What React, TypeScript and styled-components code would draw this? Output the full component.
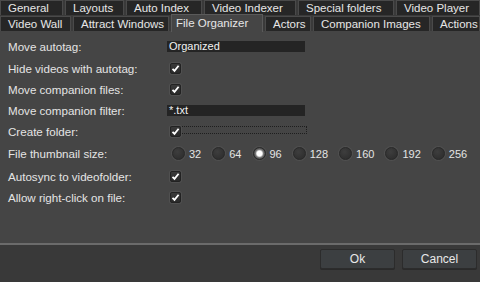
import React from 'react';
import styled, { createGlobalStyle } from 'styled-components';

const GlobalStyle = createGlobalStyle`
  html, body {
    margin: 0;
    padding: 0;
    background: #393939;
  }
  body {
    font-family: "Liberation Sans", Arial, sans-serif;
  }
`;

const Dialog = styled.div`
  width: 480px;
  height: 282px;
  display: flex;
  flex-direction: column;
  background: #393939;
  overflow: hidden;
`;

// Tabs
const TabBar = styled.div`
  display: flex;
  flex-direction: column;
  gap: 1px;
  background: #3a3a3a;
`;

const TabRow = styled.div`
  display: flex;
  gap: 2px;
  height: 15px;
`;

const Tab = styled.div<{ $w: number; $active?: boolean }>`
  width: ${(p) => p.$w}px;
  flex: ${(p) => (p.$w ? 'none' : '1')};
  box-sizing: border-box;
  padding-left: 7px;
  font-size: 11.5px;
  line-height: 14px;
  color: #e6e6e6;
  white-space: nowrap;
  background: ${(p) => (p.$active ? '#454545' : '#262626')};
  border: 1px solid ${(p) => (p.$active ? '#5a5a5a' : '#4a4a4a')};
  border-bottom: none;
  ${(p) =>
    p.$active &&
    `
    margin-top: -2px;
    height: 18px;
    line-height: 16px;
    padding-left: 4px;
    position: relative;
    z-index: 1;
  `}
`;

const Content = styled.div`
  height: 214px;
  background: #454545;
  padding: 5px 0 0 8px;
  box-sizing: border-box;
  border-bottom: 2px solid #6b6b6b;
`;

const Row = styled.div<{ $h?: number }>`
  display: grid;
  grid-template-columns: 159px 1fr;
  align-items: center;
  height: ${(p) => p.$h ?? 21}px;
`;

const Label = styled.span`
  font-size: 11.6px;
  color: #e4e4e4;
`;

const TextBox = styled.div`
  width: 138px;
  height: 11px;
  background: #242424;
  color: #f2f2f2;
  font-size: 11px;
  line-height: 11px;
  padding-left: 2px;
  box-sizing: border-box;
`;

const Box = styled.span`
  display: inline-flex;
  align-items: center;
  justify-content: center;
  width: 11px;
  height: 11px;
  margin-left: 3px;
  box-sizing: border-box;
  border: 1px solid #222;
  border-radius: 2px;
  background: linear-gradient(#3a3a3a, #2a2a2a);
  box-shadow: 0 0 0 1px #505050;
`;

const FocusFrame = styled.div`
  width: 137px;
  height: 8px;
  margin-left: 3px;
  box-sizing: border-box;
  border: 1px dotted #1e1e1e;
  display: flex;
  align-items: flex-start;
  margin-top: -3px;
  & > ${Box} {
    margin: -1px 0 0 -1px;
  }
`;

const RadioGroup = styled.div`
  display: flex;
  align-items: center;
  margin-left: 5px;
`;

const RadioItem = styled.label`
  display: flex;
  align-items: center;
  gap: 4px;
  margin-right: 11px;
  font-size: 11px;
  color: #e4e4e4;
`;

const Dot = styled.span<{ $on?: boolean }>`
  width: 13px;
  height: 13px;
  border-radius: 50%;
  box-sizing: border-box;
  border: 1px solid #2a2a2a;
  background: ${(p) =>
    p.$on
      ? 'radial-gradient(circle, #fff 0 2.5px, #d8d8d8 3px, #7a7a7a 4px, #3a3a3a 6px)'
      : 'radial-gradient(circle at 40% 35%, #3e3e3e, #2a2a2a)'};
  box-shadow: 0 0 0 1px #505050;
`;

const Footer = styled.div`
  flex: 1;
  display: flex;
  justify-content: flex-end;
  gap: 7px;
  padding: 4px 3px 0 0;
`;

const Button = styled.button`
  width: 75px;
  height: 20px;
  background: #3c3f41;
  border: 1px solid #2c2c2c;
  border-radius: 2px;
  color: #e8e8e8;
  font-family: "Liberation Sans", Arial, sans-serif;
  font-size: 12px;
  padding: 0;
  box-shadow: 0 1px 0 #2a2a2a;
`;

const Check = () => (
  <svg width="9" height="9" viewBox="0 0 9 9">
    <path d="M1.5 4.8 L3.5 6.8 L7.6 1.8" fill="none" stroke="#fff" strokeWidth="1.8" />
  </svg>
);

const CheckBox = () => (
  <Box>
    <Check />
  </Box>
);

const row1 = [
  ['General', 63],
  ['Layouts', 59],
  ['Auto Index', 76],
  ['Video Indexer', 92],
  ['Special folders', 96],
  ['Video Player', 0],
] as const;

const row2 = [
  ['Video Wall', 71],
  ['Attract Windows', 96],
  ['File Organizer', 92],
  ['Actors', 46],
  ['Companion Images', 117],
  ['Actions', 0],
] as const;

const sizes = [32, 64, 96, 128, 160, 192, 256];

export default function App() {
  return (
    <Dialog>
      <GlobalStyle />
      <TabBar>
        <TabRow>
          {row1.map(([name, w]) => (
            <Tab key={name} $w={w}>
              {name}
            </Tab>
          ))}
        </TabRow>
        <TabRow>
          {row2.map(([name, w]) => (
            <Tab key={name} $w={w} $active={name === 'File Organizer'}>
              {name}
            </Tab>
          ))}
        </TabRow>
      </TabBar>
      <Content>
        <Row>
          <Label>Move autotag:</Label>
          <TextBox>Organized</TextBox>
        </Row>
        <Row $h={22}>
          <Label>Hide videos with autotag:</Label>
          <CheckBox />
        </Row>
        <Row>
          <Label>Move companion files:</Label>
          <CheckBox />
        </Row>
        <Row>
          <Label>Move companion filter:</Label>
          <TextBox>*.txt</TextBox>
        </Row>
        <Row>
          <Label>Create folder:</Label>
          <FocusFrame>
            <CheckBox />
          </FocusFrame>
        </Row>
        <Row $h={23}>
          <Label>File thumbnail size:</Label>
          <RadioGroup>
            {sizes.map((s) => (
              <RadioItem key={s}>
                <Dot $on={s === 96} />
                {s}
              </RadioItem>
            ))}
          </RadioGroup>
        </Row>
        <Row $h={22}>
          <Label>Autosync to videofolder:</Label>
          <CheckBox />
        </Row>
        <Row>
          <Label>Allow right-click on file:</Label>
          <CheckBox />
        </Row>
      </Content>
      <Footer>
        <Button>Ok</Button>
        <Button>Cancel</Button>
      </Footer>
    </Dialog>
  );
}
